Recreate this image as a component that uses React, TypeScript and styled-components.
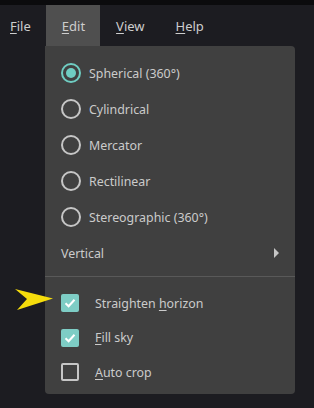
import styled, { createGlobalStyle } from "styled-components";

const Global = createGlobalStyle`
  html, body {
    margin: 0;
    background: #1c1c21;
  }
  body {
    font-family: "Noto Sans", "Open Sans", sans-serif;
    font-size: 12.4px;
    color: #cbcbcb;
  }
  u {
    text-decoration-thickness: 1px;
    text-underline-offset: 2px;
  }
`;

const Screen = styled.div`
  position: relative;
  width: 314px;
  height: 408px;
  overflow: hidden;
`;

const TopStrip = styled.div`
  height: 5px;
  background: #0b0b0d;
`;

const MenuBar = styled.nav`
  display: flex;
  height: 41px;
  font-size: 13px;
`;

const MenuItem = styled.div<{ $open?: boolean }>`
  display: flex;
  align-items: center;
  padding: 0 15px 0 16px;
  background: ${({ $open }) => ($open ? "#4f4f4f" : "transparent")};
  color: #cdcdcd;

  &:first-child {
    padding-left: 10px;
  }
`;

const Panel = styled.div`
  position: absolute;
  left: 45px;
  top: 46px;
  width: 250px;
  box-sizing: border-box;
  padding: 9px 0 4px;
  background: #404040;
  border-radius: 0 4px 4px 4px;
`;

const Row = styled.div<{ $h?: number; $gap?: number }>`
  display: flex;
  align-items: center;
  height: ${({ $h }) => $h ?? 36}px;
  padding: 0 16px;
  gap: ${({ $gap }) => $gap ?? 8}px;
`;

const Radio = styled.span<{ $on?: boolean }>`
  position: relative;
  width: 20px;
  height: 20px;
  box-sizing: border-box;
  border-radius: 50%;
  border: 2px solid ${({ $on }) => ($on ? "#6fcdc2" : "#c6c6c6")};
  flex-shrink: 0;

  &::after {
    content: "";
    display: ${({ $on }) => ($on ? "block" : "none")};
    position: absolute;
    left: 3px;
    top: 3px;
    width: 10px;
    height: 10px;
    border-radius: 50%;
    background: #6fcdc2;
  }
`;

const Check = styled.span<{ $on?: boolean }>`
  display: flex;
  align-items: center;
  justify-content: center;
  width: 18px;
  height: 18px;
  box-sizing: border-box;
  border-radius: 2px;
  flex-shrink: 0;
  background: ${({ $on }) => ($on ? "#7ecdc5" : "transparent")};
  border: ${({ $on }) => ($on ? "none" : "2px solid #c6c6c6")};
`;

const Label = styled.span`
  flex: 1;
  white-space: nowrap;
`;

const SubArrow = styled.span`
  width: 0;
  height: 0;
  border-top: 5px solid transparent;
  border-bottom: 5px solid transparent;
  border-left: 5px solid #c6c6c6;
`;

const Separator = styled.div`
  height: 1px;
  background: #595959;
  margin: 5px 0 9px;
`;

const Pointer = styled.svg`
  position: absolute;
  left: 15px;
  top: 289px;
`;

const radios = [
  { label: "Spherical (360°)", on: true },
  { label: "Cylindrical" },
  { label: "Mercator" },
  { label: "Rectilinear" },
  { label: "Stereographic (360°)" },
];

function Tick() {
  return (
    <svg width="12" height="10" viewBox="0 0 12 10">
      <path d="M1.5 5.2 L4.6 8.2 L10.5 1.8" fill="none" stroke="#fff" strokeWidth="2" />
    </svg>
  );
}

export default function App() {
  return (
    <Screen>
      <Global />
      <TopStrip />
      <MenuBar>
        <MenuItem>
          <span>
            <u>F</u>ile
          </span>
        </MenuItem>
        <MenuItem $open>
          <span>
            <u>E</u>dit
          </span>
        </MenuItem>
        <MenuItem>
          <span>
            <u>V</u>iew
          </span>
        </MenuItem>
        <MenuItem>
          <span>
            <u>H</u>elp
          </span>
        </MenuItem>
      </MenuBar>

      <Panel>
        {radios.map((r) => (
          <Row key={r.label}>
            <Radio $on={r.on} />
            <Label>{r.label}</Label>
          </Row>
        ))}
        <Row>
          <Label>Vertical</Label>
          <SubArrow />
        </Row>
        <Separator />
        <Row $h={34.5} $gap={16}>
          <Check $on>
            <Tick />
          </Check>
          <Label>
            Straighten <u>h</u>orizon
          </Label>
        </Row>
        <Row $h={34.5} $gap={16}>
          <Check $on>
            <Tick />
          </Check>
          <Label>
            <u>F</u>ill sky
          </Label>
        </Row>
        <Row $h={34.5} $gap={16}>
          <Check />
          <Label>
            <u>A</u>uto crop
          </Label>
        </Row>
      </Panel>

      <Pointer width="39" height="22" viewBox="0 0 39 22">
        <polygon points="0,0 38,9.5 2,21 12,10" fill="#f5dc0c" />
      </Pointer>
    </Screen>
  );
}
